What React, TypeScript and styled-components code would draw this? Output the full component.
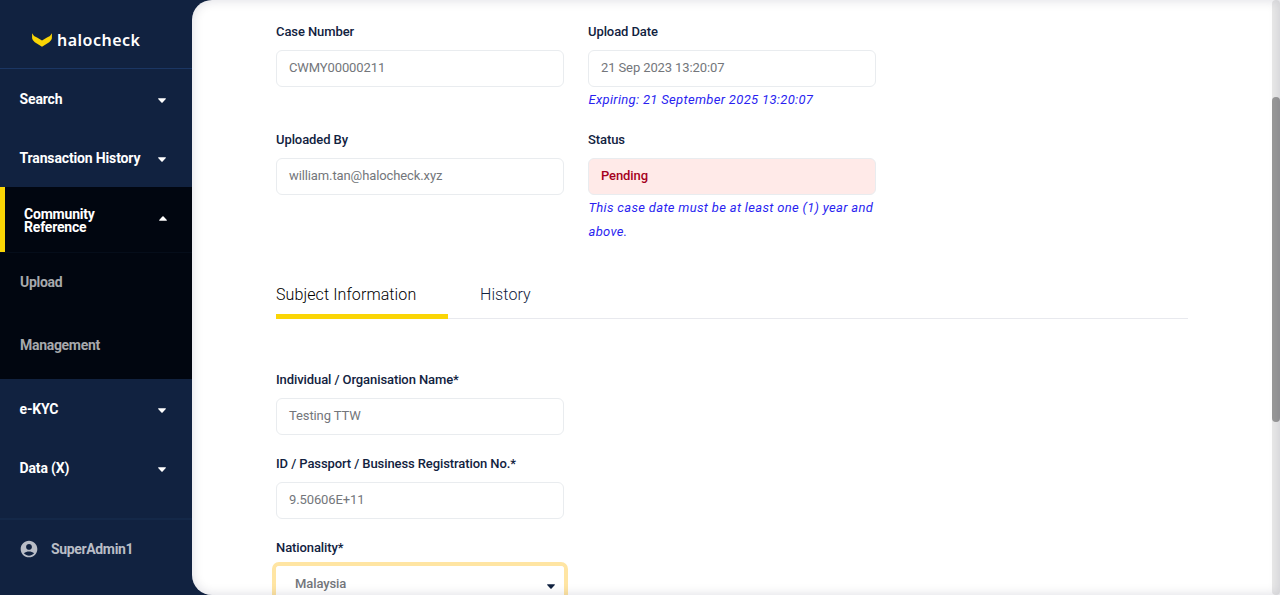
import React from "react";
import styled, { createGlobalStyle, css } from "styled-components";

const GlobalStyle = createGlobalStyle`
  *, *::before, *::after { box-sizing: border-box; }
  body { margin: 0; overflow: hidden; background: #112240; font-family: Roboto, "Liberation Sans", sans-serif; }
`;

const Page = styled.div`
  display: flex;
  height: 595px;
  overflow: hidden;
  background: #112240;
`;

const Sidebar = styled.nav`
  display: flex;
  flex-direction: column;
  width: 192px;
  flex: none;
  color: #fff;
  font-size: 14px;
  font-weight: 700;
`;

const Brand = styled.div`
  display: flex;
  align-items: center;
  gap: 5px;
  height: 69px;
  padding: 11px 0 0 32px;
  border-bottom: 1px solid #1b3663;
`;

const BrandName = styled.span`
  font-family: "Noto Sans", sans-serif;
  font-size: 16px;
  font-weight: 600;
  line-height: 20px;
  letter-spacing: 0.5px;
`;

const MenuItem = styled.div<{ $active?: boolean }>`
  display: flex;
  align-items: center;
  justify-content: space-between;
  height: 59px;
  padding: 0 26px 0 19.5px;
  line-height: 16px;
  letter-spacing: -0.15px;
  svg {
    margin-top: 3px;
  }
  ${(p) =>
    p.$active &&
    css`
      height: 65px;
      padding: 2px 25px 0 19px;
      border-left: 5px solid #fad505;
      background: #010610;
      line-height: 13px;
      letter-spacing: -0.2px;
      svg {
        margin-top: -4px;
      }
    `}
`;

const MenuLabel = styled.span`
  max-width: 125px;
  white-space: pre-line;
`;

const SubMenu = styled.div`
  height: 127px;
  border-top: 1px solid #050d1a;
  background: #010610;
`;

const SubItem = styled.div`
  display: flex;
  align-items: center;
  height: 63px;
  padding: 0 20px 6px;
  color: #a7a9ac;
  letter-spacing: -0.3px;
`;

const Account = styled.div`
  display: flex;
  align-items: center;
  gap: 12px;
  height: 77px;
  margin-top: auto;
  padding: 0 0 18px 19px;
  border-top: 2px solid #142848;
  color: #b9bdc6;
  letter-spacing: -0.35px;
`;

const Panel = styled.main`
  position: relative;
  display: flex;
  flex: 1;
  overflow: hidden;
  border-radius: 20px 0 0 20px;
  background: #fff;
  &::after {
    content: "";
    position: absolute;
    inset: 0;
    border-radius: inherit;
    box-shadow: inset 0 0 12px rgba(17, 17, 51, 0.14);
    pointer-events: none;
  }
`;

const Content = styled.div`
  flex: 1;
  padding: 20px 84px 0;
`;

const Summary = styled.div`
  display: grid;
  grid-template-columns: 288px 288px;
  column-gap: 24px;
  grid-template-rows: 108px 150px;
`;

const Field = styled.div`
  width: 288px;
`;

const FieldLabel = styled.div`
  height: 24px;
  margin-bottom: 6px;
  color: #112240;
  font-size: 13px;
  font-weight: 500;
  line-height: 24px;
  letter-spacing: -0.09px;
`;

const Box = styled.div<{ $pending?: boolean }>`
  height: 37px;
  padding: 0 12px;
  border: 1px solid #e9ecef;
  border-radius: 6px;
  background: ${(p) => (p.$pending ? "#ffeae8" : "#fff")};
  color: ${(p) => (p.$pending ? "#a50021" : "#73767b")};
  font-size: 13px;
  font-weight: ${(p) => (p.$pending ? 500 : 400)};
  line-height: 34px;
  letter-spacing: -0.11px;
`;

const Note = styled.div`
  margin: 1px -6px 0 0.5px;
  color: #2a1ff0;
  font-size: 13px;
  font-style: italic;
  line-height: 24px;
  letter-spacing: 0.32px;
`;

const Tabs = styled.div`
  display: flex;
  height: 41px;
  border-bottom: 1px solid #e8e9ee;
`;

const Tab = styled.div<{ $active?: boolean }>`
  height: 41px;
  width: ${(p) => (p.$active ? "172px" : "auto")};
  padding: ${(p) => (p.$active ? "0" : "0 32px")};
  border-bottom: ${(p) => (p.$active ? "5px solid #fad505" : "0")};
  color: ${(p) => (p.$active ? "#000" : "#112240")};
  font-size: 16px;
  font-weight: 300;
  line-height: 33px;
  letter-spacing: 0.1px;
`;

const Details = styled.div`
  display: grid;
  row-gap: 17px;
  padding-top: 49px;
`;

const Select = styled.div`
  display: flex;
  align-items: center;
  justify-content: space-between;
  height: 37px;
  padding: 0 8px 2px 18px;
  border: 1px solid #fff;
  border-radius: 3px;
  box-shadow: 0 0 0 4px #ffe5a3;
  color: #73767b;
  font-size: 13px;
  font-weight: 500;
  letter-spacing: -0.1px;
  svg {
    margin-top: 5px;
  }
`;

const ScrollTrack = styled.div`
  width: 8px;
  height: 595px;
  padding-top: 97px;
  border-radius: 4px;
  background: #e9e9e9;
`;

const ScrollThumb = styled.div`
  height: 325px;
  border-radius: 4px;
  background: #999;
`;

const Caret = ({ up, color = "#fff" }: { up?: boolean; color?: string }) => (
  <svg width="8" height="5" viewBox="0 0 8 5">
    <path d={up ? "M.2 4.8V4L3.4.5Q4 0 4.6.5L7.8 4V4.8Z" : "M.2.2V1L3.4 4.5Q4 5 4.6 4.5L7.8 1V.2Z"} fill={color} />
  </svg>
);

const MenuEntry = ({ text, active }: { text: string; active?: boolean }) => (
  <MenuItem $active={active}>
    <MenuLabel>{text}</MenuLabel>
    <Caret up={active} />
  </MenuItem>
);

const TextField = ({ label, value, note, pending }: { label: string; value: string; note?: string; pending?: boolean }) => (
  <Field>
    <FieldLabel>{label}</FieldLabel>
    <Box $pending={pending}>{value}</Box>
    {note && <Note>{note}</Note>}
  </Field>
);

export default function App() {
  return (
    <>
      <GlobalStyle />
      <Page>
        <Sidebar>
          <Brand>
            <svg width="20" height="14" viewBox="0 0 20 14">
              <path d="M.1.2Q1 2.8 5 4.6L10 7.6 15 4.6Q19 2.8 19.9.2V5.3Q19.6 7.6 17.2 9.2L10 13.7 2.8 9.2Q.4 7.6.1 5.3Z" fill="#fad505" />
            </svg>
            <BrandName>halocheck</BrandName>
          </Brand>
          <MenuEntry text="Search" />
          <MenuEntry text="Transaction History" />
          <MenuEntry text={"Community\nReference"} active />
          <SubMenu>
            <SubItem>Upload</SubItem>
            <SubItem>Management</SubItem>
          </SubMenu>
          <MenuEntry text="e-KYC" />
          <MenuEntry text="Data (X)" />
          <Account>
            <svg width="20" height="20" viewBox="0 0 24 24" fill="currentColor">
              <path d="M12 2C6.48 2 2 6.48 2 12s4.48 10 10 10 10-4.48 10-10S17.52 2 12 2zm0 4c1.93 0 3.5 1.57 3.5 3.5S13.93 13 12 13s-3.5-1.57-3.5-3.5S10.07 6 12 6zm0 14c-2.03 0-4.43-.82-6.14-2.88C7.55 15.8 9.68 15 12 15s4.45.8 6.14 2.12C16.43 19.18 14.03 20 12 20z" />
            </svg>
            <span>SuperAdmin1</span>
          </Account>
        </Sidebar>
        <Panel>
          <Content>
            <Summary>
              <TextField label="Case Number" value="CWMY00000211" />
              <TextField label="Upload Date" value="21 Sep 2023 13:20:07" note="Expiring: 21 September 2025 13:20:07" />
              <TextField label="Uploaded By" value="william.tan@halocheck.xyz" />
              <TextField label="Status" value="Pending" pending note="This case date must be at least one (1) year and above." />
            </Summary>
            <Tabs>
              <Tab $active>Subject Information</Tab>
              <Tab>History</Tab>
            </Tabs>
            <Details>
              <TextField label="Individual / Organisation Name*" value="Testing TTW" />
              <TextField label="ID / Passport / Business Registration No.*" value="9.50606E+11" />
              <Field>
                <FieldLabel>Nationality*</FieldLabel>
                <Select>
                  <span>Malaysia</span>
                  <Caret color="#112240" />
                </Select>
              </Field>
            </Details>
          </Content>
          <ScrollTrack>
            <ScrollThumb />
          </ScrollTrack>
        </Panel>
      </Page>
    </>
  );
}
